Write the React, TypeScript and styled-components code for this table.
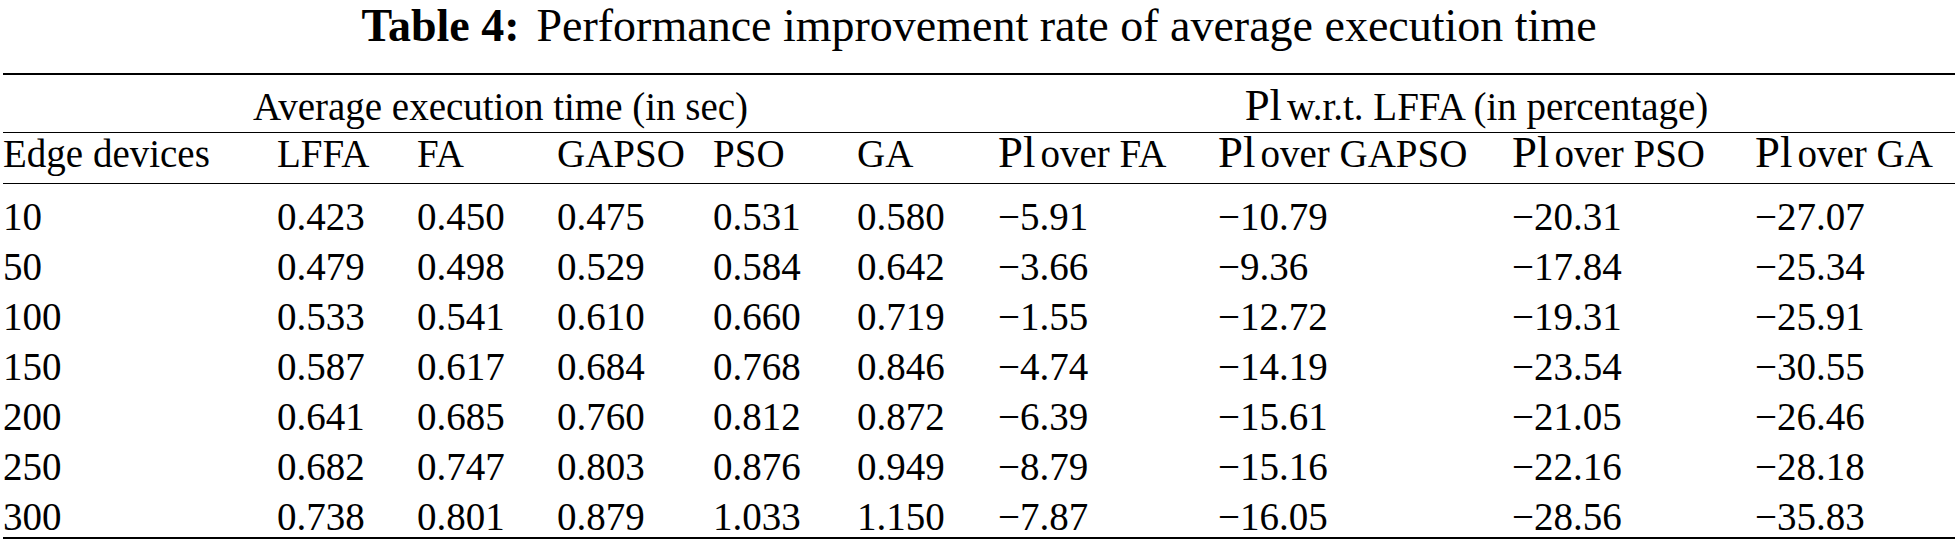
import React from "react";
import styled, { createGlobalStyle } from "styled-components";

const GlobalStyle = createGlobalStyle`
  body {
    margin: 0;
    background: #ffffff;
    color: #000000;
    font-family: "Liberation Serif", "Times New Roman", serif;
  }
`;

const columns = "274px 140px 140px 156px 144px 141px 220px 294px 243px 200px";

const Page = styled.div`
  width: 1958px;
  padding: 0 3px;
  box-sizing: border-box;
`;

const Title = styled.div`
  height: 51px;
  margin-bottom: 22px;
  font-size: 46px;
  line-height: 51px;
  text-align: center;
  white-space: nowrap;

  b {
    margin-right: 17px;
  }
`;

const Table = styled.div`
  width: 1952px;
  border-top: 2px solid #000;
  border-bottom: 2px solid #000;
  font-size: 39px;
`;

const Row = styled.div<{ $rule?: boolean }>`
  display: grid;
  grid-template-columns: ${columns};
  border-bottom: ${(p) => (p.$rule ? "1px solid #000" : "none")};
`;

const SpannerCell = styled.div<{ $span: number }>`
  grid-column: span ${(p) => p.$span};
  height: 57px;
  padding-top: 7px;
  box-sizing: border-box;
  line-height: 50px;
  text-align: center;
  white-space: nowrap;
`;

const HeadCell = styled.div`
  height: 50px;
  line-height: 42px;
  white-space: nowrap;
`;

const Cell = styled.div<{ $last?: boolean }>`
  height: ${(p) => (p.$last ? 53 : 50)}px;
  padding-top: 16px;
  box-sizing: border-box;
  line-height: 34px;
  white-space: nowrap;
`;

const PI = styled.span`
  font-size: 1.15em;
  line-height: 0;
  margin-right: 5px;
`;

const algos = ["FA", "GAPSO", "PSO", "GA"];

const rows: [string, string[], string[]][] = [
  ["10", ["0.423", "0.450", "0.475", "0.531", "0.580"], ["5.91", "10.79", "20.31", "27.07"]],
  ["50", ["0.479", "0.498", "0.529", "0.584", "0.642"], ["3.66", "9.36", "17.84", "25.34"]],
  ["100", ["0.533", "0.541", "0.610", "0.660", "0.719"], ["1.55", "12.72", "19.31", "25.91"]],
  ["150", ["0.587", "0.617", "0.684", "0.768", "0.846"], ["4.74", "14.19", "23.54", "30.55"]],
  ["200", ["0.641", "0.685", "0.760", "0.812", "0.872"], ["6.39", "15.61", "21.05", "26.46"]],
  ["250", ["0.682", "0.747", "0.803", "0.876", "0.949"], ["8.79", "15.16", "22.16", "28.18"]],
  ["300", ["0.738", "0.801", "0.879", "1.033", "1.150"], ["7.87", "16.05", "28.56", "35.83"]],
];

export default function App() {
  return (
    <>
      <GlobalStyle />
      <Page>
        <Title>
          <b>Table 4:</b>Performance improvement rate of average execution time
        </Title>
        <Table>
          <Row $rule>
            <SpannerCell $span={6}>Average execution time (in sec)</SpannerCell>
            <SpannerCell $span={4}>
              <PI>Pl</PI>w.r.t. LFFA (in percentage)
            </SpannerCell>
          </Row>
          <Row $rule>
            <HeadCell>Edge devices</HeadCell>
            <HeadCell>LFFA</HeadCell>
            {algos.map((a) => (
              <HeadCell key={`h-${a}`}>{a}</HeadCell>
            ))}
            {algos.map((a) => (
              <HeadCell key={`pi-${a}`}>
                <PI>Pl</PI>over {a}
              </HeadCell>
            ))}
          </Row>
          {rows.map(([devices, times, rates], i) => {
            const last = i === rows.length - 1;
            return (
              <Row key={`row-${devices}`}>
                <Cell $last={last}>{devices}</Cell>
                {times.map((t, j) => (
                  <Cell key={`t-${j}`} $last={last}>
                    {t}
                  </Cell>
                ))}
                {rates.map((r, j) => (
                  <Cell key={`r-${j}`} $last={last}>
                    {"\u2212" + r}
                  </Cell>
                ))}
              </Row>
            );
          })}
        </Table>
      </Page>
    </>
  );
}
